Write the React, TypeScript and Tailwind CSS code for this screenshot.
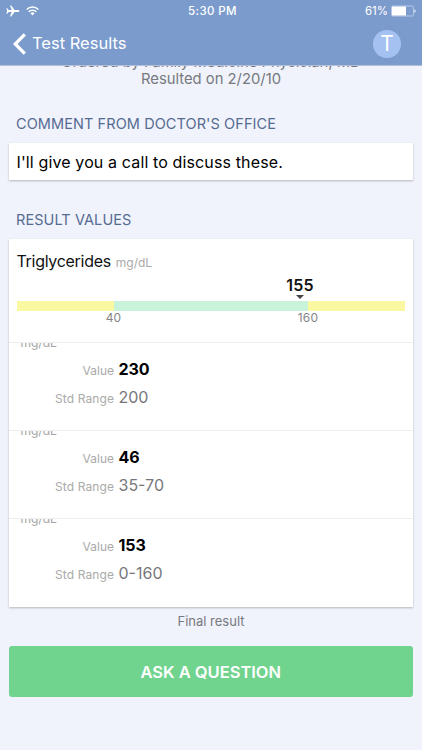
type Result = {
  value: string;
  range: string;
};

const results: Result[] = [
  { value: "230", range: "200" },
  { value: "46", range: "35-70" },
  { value: "153", range: "0-160" },
];

function StatusBar() {
  return (
    <div className="grid h-[22px] grid-cols-3 items-center pl-[6px] pr-[6px] text-[11.5px] font-medium">
      <div className="flex items-center gap-[6px]">
        <svg width="14" height="12" viewBox="0 0 14 12" fill="currentColor">
          <path d="M13.4 6c0-.6-.7-1-1.6-1H8.6L5.2.5H4l1.7 4.5H2.6L1.3 3.3H.4L1.1 6 .4 8.7h.9L2.6 7h3.1L4 11.5h1.2L8.6 7h3.2c.9 0 1.6-.4 1.6-1Z" />
        </svg>
        <svg width="13" height="10" viewBox="0 0 13 10" fill="none" stroke="currentColor" strokeWidth="1.5">
          <path d="M.7 3.5a8.2 8.2 0 0 1 11.6 0" />
          <path d="M2.7 5.7a5.4 5.4 0 0 1 7.6 0" />
          <path d="M4.5 7.3a2.8 2.8 0 0 1 4 0l-2 2.2Z" fill="currentColor" stroke="none" />
        </svg>
      </div>
      <span className="pl-[3px] pt-[2px] text-center tracking-[0.4px]">5:30 PM</span>
      <div className="flex items-center justify-end gap-[3px]">
        <span className="pt-[2px] font-normal">61%</span>
        <svg width="25" height="12" viewBox="0 0 25 12">
          <rect x=".5" y="1" width="22" height="10" rx="1.2" fill="none" stroke="#b9cae8" />
          <rect x="1" y="1.5" width="14" height="9" rx=".5" fill="white" />
          <path d="M23.5 4.2c1.4.5 1.4 3.1 0 3.6Z" fill="white" />
        </svg>
      </div>
    </div>
  );
}

function Header() {
  return (
    <header className="relative z-10 h-[65px] bg-[#7b9bcd] text-white shadow-[0_1px_0_#b3bfdb]">
      <StatusBar />
      <div className="flex h-[43px] items-center pl-[12px] pr-[21px]">
        <svg width="15" height="22" viewBox="0 0 15 22" fill="none" stroke="currentColor" strokeWidth="3.2">
          <path d="M12.8 1.3 3.2 11l9.6 9.7" />
        </svg>
        <h1 className="ml-[5px] flex-1 text-[16.5px]">Test Results</h1>
        <div className="flex size-7 items-center justify-center rounded-full bg-[#a4c1f2] text-[21px]">
          T
        </div>
      </div>
    </header>
  );
}

function RangeChart() {
  return (
    <div className="h-[103px] px-2 pt-[12px]">
      <div className="flex items-baseline gap-[5px] leading-5">
        <h3 className="text-[16px] tracking-[-0.3px] text-[#111]">Triglycerides</h3>
        <span className="text-[12px] text-[#aaa]">mg/dL</span>
      </div>
      <div className="ml-[263.5px] mt-[2px] flex w-10 flex-col items-center">
        <span className="text-[16px] font-semibold leading-5 tracking-[0.2px] text-[#111]">155</span>
        <svg width="8" height="4" viewBox="0 0 8 4">
          <path d="M0 0h8L4 4Z" fill="#444" />
        </svg>
      </div>
      <div className="mt-[2px] flex h-[10px]">
        <div className="w-1/4 bg-[#faf8a0]" />
        <div className="w-1/2 bg-[#c8f2d9]" />
        <div className="w-1/4 bg-[#faf8a0]" />
      </div>
      <div className="-mt-px flex text-[12px] leading-4 tracking-[0.2px] text-[#858585]">
        <span className="ml-[77px] w-10 text-center">40</span>
        <span className="ml-[154.5px] w-10 text-center">160</span>
      </div>
    </div>
  );
}

function ResultRow({ value, range }: Result) {
  return (
    <div className="h-[88px] overflow-hidden border-t border-[#eeeeef]">
      <div className="-mt-[8px] ml-[12px] text-[12px] leading-4 text-[#a3a3a3]">mg/dL</div>
      <dl className="mt-[4px] grid grid-cols-[105.5px_1fr] auto-rows-[28px] items-baseline gap-x-[4.5px] leading-7">
        <dt className="text-right text-[12px] text-[#aaa]">Value</dt>
        <dd className="text-[16px] font-bold tracking-[-0.1px] text-black">{value}</dd>
        <dt className="text-right text-[12px] tracking-[0.1px] text-[#aaa]">Std Range</dt>
        <dd className="text-[16px] text-[#77777b]">{range}</dd>
      </dl>
    </div>
  );
}

export default function App() {
  return (
    <div className="h-[750px] w-[422px] overflow-hidden bg-[#f0f3fb] font-['Inter',sans-serif]">
      <Header />
      <main className="h-[685px] overflow-hidden px-[8.5px]">
        <div className="-mt-[11px] text-center text-[14.8px] leading-[17px] text-[#77797e]">
          <p>Ordered by Family Medicine Physician, MD</p>
          <p>Resulted on 2/20/10</p>
        </div>

        <h2 className="mt-[26px] pl-[7.5px] text-[14.5px] leading-5 tracking-[0.08px] text-[#566b92]">
          COMMENT FROM DOCTOR'S OFFICE
        </h2>
        <div className="mt-[9px] h-[37px] w-[404.5px] bg-white pl-[8px] text-[16px] leading-[38px] tracking-[0.13px] text-black shadow-[0_1px_2px_#b5b6bb]">
          I'll give you a call to discuss these.
        </div>

        <h2 className="mt-[30px] pl-[7.5px] text-[14.5px] leading-5 tracking-[0.08px] text-[#566b92]">
          RESULT VALUES
        </h2>
        <section className="mt-[9px] h-[368px] w-[404.5px] bg-white shadow-[0_1px_2px_#b5b6bb]">
          <RangeChart />
          {results.map((result) => (
            <ResultRow key={result.value} {...result} />
          ))}
        </section>

        <p className="mt-[5px] text-center text-[13px] leading-[18px] text-[#77797e]">Final result</p>
        <button className="mt-4 h-[51px] w-[404.5px] rounded-[3px] bg-[#70d48f] pt-px text-[16.5px] font-semibold tracking-[-0.02px] text-white">
          ASK A QUESTION
        </button>
      </main>
    </div>
  );
}
